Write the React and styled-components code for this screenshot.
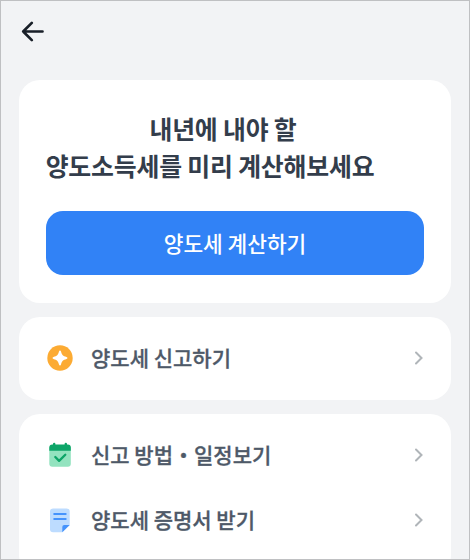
import styled, { createGlobalStyle } from 'styled-components';

const GlobalStyle = createGlobalStyle`
  * {
    box-sizing: border-box;
  }

  body {
    margin: 0;
    background: #f2f3f5;
    font-family: 'Noto Sans CJK KR', 'Noto Sans', sans-serif;
  }
`;

const Screen = styled.div`
  display: flex;
  flex-direction: column;
  width: 470px;
  height: 560px;
  overflow: hidden;
  border: 1px solid #bfc0c2;
  background: #f2f3f5;
`;

const Header = styled.header`
  display: flex;
  align-items: center;
  flex: none;
  height: 61px;
  padding-left: 20px;
`;

const BackButton = styled.button`
  display: flex;
  padding: 0;
  border: 0;
  background: none;
`;

const Content = styled.main`
  display: flex;
  flex-direction: column;
  gap: 14px;
  padding: 18px 18px 0;
`;

const Card = styled.section`
  flex: none;
  padding: ${(props) => props.$padding};
  border-radius: 21px;
  background: #fff;
`;

const Title = styled.h1`
  display: flex;
  flex-direction: column;
  align-items: center;
  width: 328px;
  margin: 0 0 27px;
  color: #333d4b;
  font-size: 24.9px;
  font-weight: 700;
  line-height: 37px;
  letter-spacing: -0.2px;
  white-space: nowrap;
`;

const FirstLine = styled.span`
  padding-left: 26px;
`;

const PrimaryButton = styled.button`
  display: block;
  width: 100%;
  height: 64px;
  padding: 0 0 1px;
  border: 0;
  border-radius: 17px;
  background: #3182f6;
  color: #fff;
  font-family: inherit;
  font-size: 21.4px;
  font-weight: 500;
  line-height: 62px;
`;

const Row = styled.div`
  display: flex;
  align-items: center;
  height: 65px;
`;

const RowLabel = styled.span`
  flex: 1;
  margin-left: 17px;
  padding-bottom: 2px;
  color: #4e5968;
  font-size: 21px;
  font-weight: 500;
  line-height: 30px;
  white-space: nowrap;
  -webkit-text-stroke: 0.3px #4e5968;
`;

const BackIcon = () => (
  <svg width="24" height="24" viewBox="0 0 24 24" fill="none">
    <path
      d="M21.500 11.500H2.200M10.800 2.900L2.200 11.500l8.600 8.600"
      stroke="#191f28"
      strokeWidth="2.700"
      strokeLinecap="round"
      strokeLinejoin="round"
    />
  </svg>
);

const SparkIcon = () => (
  <svg width="28" height="28" viewBox="0 0 28 28">
    <circle cx="14" cy="14" r="12.7" fill="#fcab33" />
    <path
      d="M14 6.500c.5 0 .8.4 1 1 1 3.600 1.900 4.500 5.500 5.500.6.2 1 .5 1 1s-.4.800-1 1c-3.600 1-4.500 1.900-5.500 5.500-.2.600-.5 1-1 1s-.8-.4-1-1c-1-3.600-1.900-4.500-5.500-5.500-.6-.2-1-.5-1-1s.4-.8 1-1c3.600-1 4.500-1.900 5.500-5.500.2-.6.5-1 1-1z"
      fill="#fff"
    />
  </svg>
);

const CalendarIcon = () => (
  <svg width="28" height="28" viewBox="0 0 28 28">
    <rect x="3.300" y="4.500" width="21.500" height="21.200" rx="3" fill="#93e3bf" />
    <path
      d="M3.300 9.800V6.500a3 3 0 0 1 3-3h.7V3a1.200 1.200 0 0 1 2.400 0v.5h9.200V3a1.200 1.200 0 0 1 2.400 0v.5h.8a3 3 0 0 1 3 3v3.300z"
      fill="#0da568"
    />
    <path
      d="M9.300 16l3.800 3.900 6.200-6.200"
      fill="none"
      stroke="#0da568"
      strokeWidth="2.300"
      strokeLinecap="round"
      strokeLinejoin="round"
    />
  </svg>
);

const DocumentIcon = () => (
  <svg width="28" height="28" viewBox="0 0 28 28">
    <path
      d="M7 2.500h13.700a3 3 0 0 1 3 3v13.400L16.300 26.300H7a3 3 0 0 1-3-3V5.500a3 3 0 0 1 3-3z"
      fill="#bddcff"
    />
    <path d="M16.300 26.300v-5.400a2 2 0 0 1 2-2h5.400z" fill="#4593fc" />
    <path
      d="M8.200 8.100h11.500M8.200 12.900h11.500"
      stroke="#4593fc"
      strokeWidth="2"
      strokeLinecap="round"
    />
  </svg>
);

const ChevronIcon = () => (
  <svg width="10" height="14" viewBox="0 0 10 14" fill="none">
    <path d="M2 1.500L7.500 7 2 12.500" stroke="#b0b5b9" strokeWidth="2" strokeLinecap="round" />
  </svg>
);

const MenuRow = ({ icon, label }) => (
  <Row>
    {icon}
    <RowLabel>{label}</RowLabel>
    <ChevronIcon />
  </Row>
);

const App = () => {
  return (
    <>
      <GlobalStyle />
      <Screen>
        <Header>
          <BackButton aria-label="뒤로">
            <BackIcon />
          </BackButton>
        </Header>
        <Content>
          <Card $padding="30px 27px 28px">
            <Title>
              <FirstLine>내년에 내야 할</FirstLine>
              <span>양도소득세를 미리 계산해보세요</span>
            </Title>
            <PrimaryButton>양도세 계산하기</PrimaryButton>
          </Card>
          <Card $padding="8px 27px 10px">
            <MenuRow icon={<SparkIcon />} label="양도세 신고하기" />
          </Card>
          <Card $padding="8px 27px 24px">
            <MenuRow icon={<CalendarIcon />} label="신고 방법・일정보기" />
            <MenuRow icon={<DocumentIcon />} label="양도세 증명서 받기" />
          </Card>
        </Content>
      </Screen>
    </>
  );
};

export default App;
